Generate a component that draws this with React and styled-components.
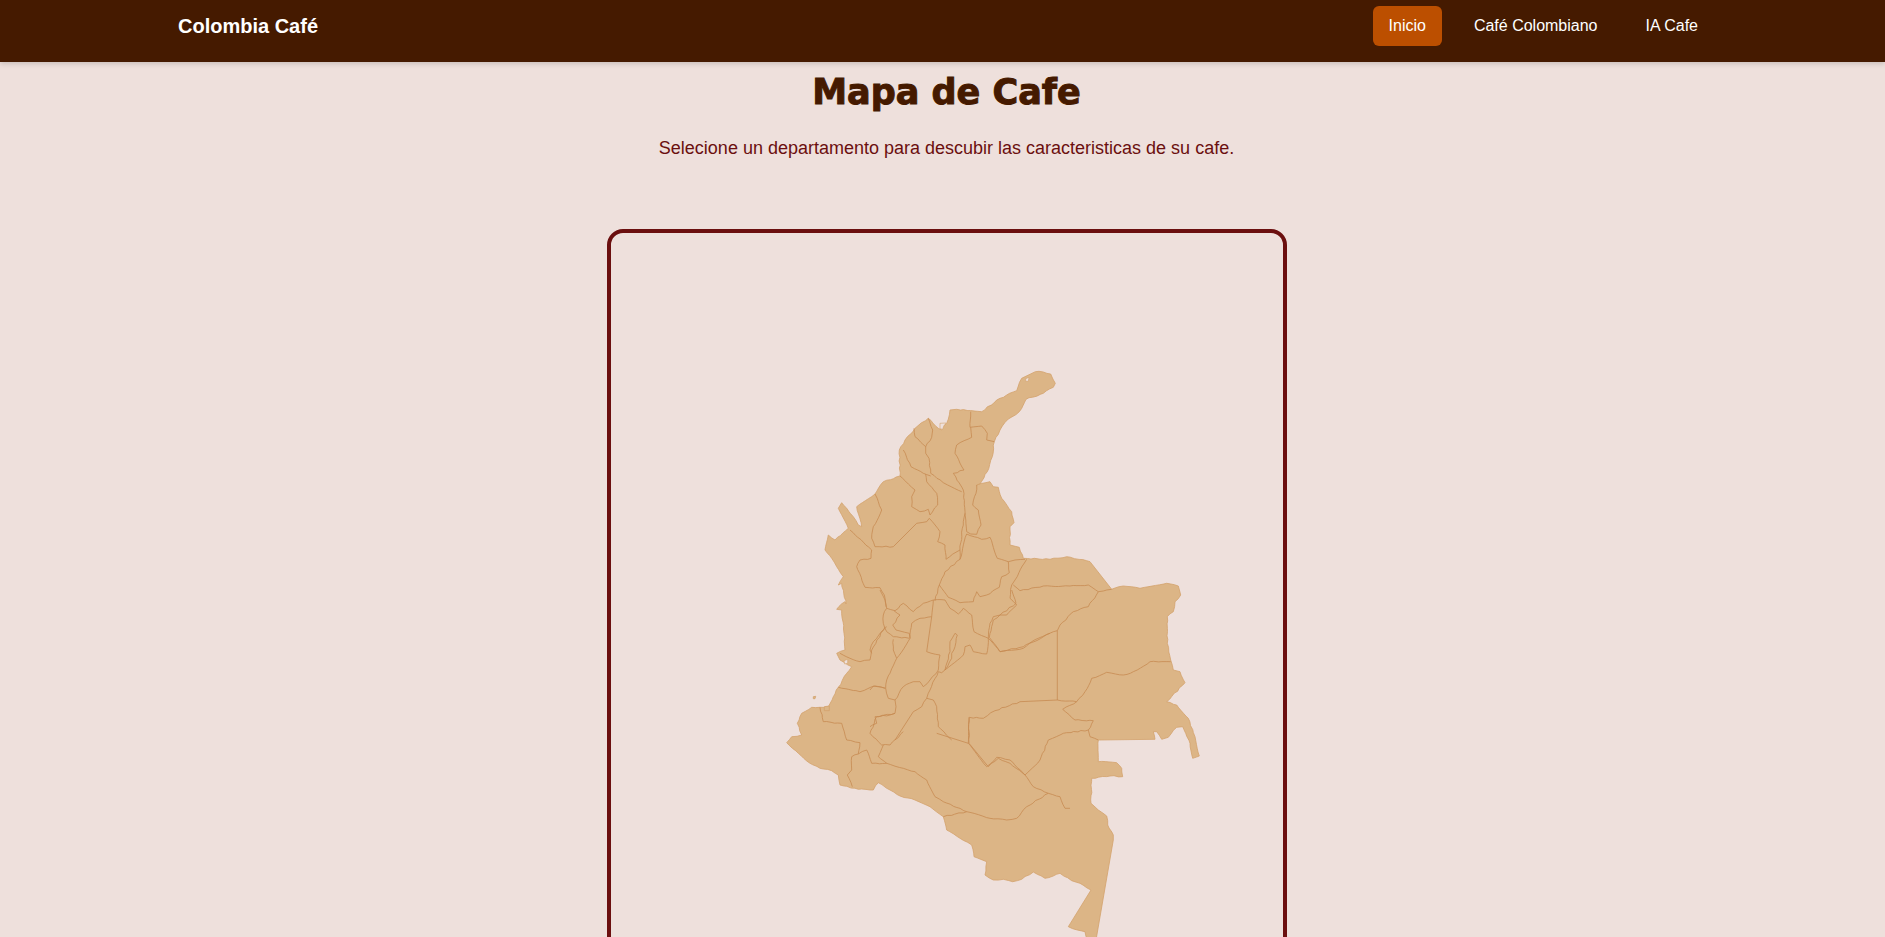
import React from "react"
import styled, { createGlobalStyle } from "styled-components"

// traced from crops, each list is [x, y] in crop pixels (3x), origin is the crop corner
const crop = (ox, oy) => (pts) => pts.map(([x, y]) => [ox + x / 3, oy + y / 3])
const north = crop(760, 350)
const east = crop(960, 500)
const west = crop(770, 600)
const south = crop(840, 740)
const center = crop(870, 590)

const outline = [
  ...north([[826,65],[850,66],[872,72],[886,100],[880,112],[850,130],[798,148],[778,185],[745,207],[720,240],[703,275],[697,320],[682,365],[660,402],[650,405],[690,395],[700,410],[715,412],[725,445],[755,485],[762,518],[750,530],[750,585],[778,592],[790,625],[870,628]]),
  ...east([[270,178],[320,170],[380,182],[390,185],[455,268],[490,258],[540,265],[620,250],[655,258],[662,285],[645,305],[640,335],[622,350],[622,430],[632,480],[640,510],[660,515],[675,548],[620,605],[650,615],[685,655],[705,710],[718,768],[698,775],[690,730],[668,680],[650,682],[625,712],[605,718],[590,695],[580,695],[585,718],[415,720]]),
  ...south([[775,65],[830,68],[845,85],[848,110],[810,108],[755,115],[753,190],[775,210],[800,228],[803,255],[820,285],[820,300],[768,600],[742,600],[735,575],[712,570],[685,560],[753,450],[720,430],[695,422],[660,400],[615,415],[580,396],[545,418],[518,425],[490,418],[460,420],[435,405],[440,365],[402,350],[395,315],[360,295],[320,270],[310,230],[270,200],[225,180],[180,168],[150,150],[115,128],[100,150],[55,148],[0,135]]),
  ...west([[210,555],[205,525],[185,512],[150,505],[120,490],[85,460],[50,428],[65,410],[95,405],[82,370],[95,340],[125,322],[150,322],[175,320],[190,290],[205,262],[230,220],[245,200],[210,180],[200,160],[225,150],[222,100],[215,30],[200,28],[225,5]]),
  ...north([[258,762],[245,700],[235,705],[250,680],[230,650],[215,625],[195,600],[205,555],[225,570],[265,535],[235,475],[245,458],[280,500],[295,525],[305,530],[290,470],[345,432],[370,395],[420,378],[418,300],[435,270],[465,235],[505,205],[535,235],[545,240],[560,220],[570,180],[590,178],[665,185],[720,145],[770,122],[785,85]]),
]

const borders = [
  north([[632,185],[630,232],[665,228],[682,250],[680,270],[703,275]]),
  north([[632,232],[635,262],[590,285],[585,310],[612,360],[580,370],[610,420],[615,485],[620,545],[632,552]]),
  north([[650,405],[648,430],[638,465],[655,480],[663,525],[650,553],[632,552]]),
  north([[505,205],[518,240],[515,262],[497,290],[465,260],[462,235]]),
  north([[497,290],[497,310],[507,325],[512,370],[550,398],[605,425]]),
  north([[430,300],[453,350],[490,370],[512,378]]),
  north([[420,378],[465,420],[455,440],[455,470],[480,485],[505,478],[510,495],[533,465],[530,430],[500,395],[497,372]]),
  north([[345,432],[365,480],[340,530],[335,565],[345,590],[400,590],[470,520],[500,515],[508,505]]),
  north([[508,505],[540,545],[533,575],[555,585],[558,628],[600,600],[610,515],[615,490]]),
  north([[600,600],[600,628],[555,665],[538,705],[525,752]]),
  north([[378,770],[373,735],[360,713],[315,712],[290,650],[300,630],[333,625],[335,600],[270,540]]),
  north([[600,628],[620,552],[665,568],[690,562],[712,625],[745,635],[748,668],[725,680],[718,712],[680,735],[660,740],[650,725],[640,755],[600,758],[565,742],[538,705]]),
  north([[745,635],[765,630],[795,628]]),
  east([[160,255],[180,272],[250,258],[330,258],[385,255],[415,275],[455,268]]),
  east([[415,275],[385,320],[340,335],[300,375],[292,392],[215,425],[190,445],[120,455],[88,412]]),
  east([[292,392],[292,600]]),
  east([[200,178],[165,240],[155,255],[150,295],[170,315],[140,345],[120,345],[100,360],[88,412]]),
  east([[632,485],[570,485],[520,515],[490,525],[440,517],[395,535],[375,575],[350,605],[292,600],[180,605],[105,632],[70,655],[28,652],[25,730],[80,800],[110,772],[150,780],[195,825]]),
  east([[308,628],[350,605]]),
  east([[308,628],[345,660],[400,662],[385,690],[310,700],[265,720],[240,780],[195,825]]),
  east([[385,690],[390,710],[415,720]]),
  // coffee belt, finer crop
  center([[30,0],[45,30],[50,55],[40,75],[40,100],[50,125],[70,140],[118,145]]),
  center([[50,55],[75,62],[100,40],[130,65],[160,40],[190,30],[225,30],[240,55],[265,72],[280,55],[305,75],[312,125],[355,145]]),
  center([[72,62],[90,75],[68,105],[78,120],[118,130],[120,145]]),
  center([[190,30],[185,80],[150,85],[125,100],[120,145],[80,205],[50,270],[47,295],[55,325],[75,330],[100,290],[130,275],[150,275],[160,290],[180,270],[205,240],[210,195],[170,185],[185,80]]),
  center([[47,295],[10,288],[0,300]]),
  center([[50,110],[10,155],[0,180],[5,190]]),
  center([[70,148],[70,180],[80,205]]),
  center([[255,130],[262,135],[255,170],[245,190],[245,205],[225,240],[240,185],[240,155],[255,130]]),
  center([[205,245],[215,248],[280,195],[285,170],[300,165],[310,185],[350,192],[355,145]]),
  center([[355,145],[390,185],[460,170],[540,130]]),
  center([[205,245],[180,300],[170,325],[190,330],[200,350],[205,410],[245,450]]),
  center([[170,325],[155,350],[130,365],[75,450]]),
  center([[355,145],[360,100],[370,80],[390,75],[438,40],[430,15],[425,0]]),
  center([[75,330],[78,350],[75,370],[60,375],[15,380],[20,400],[0,410]]),
  west([[500,400],[595,430]]),
  west([[597,352],[597,430],[655,500],[685,475],[720,490],[765,525],[790,560],[835,580],[870,590],[885,625],[900,625]]),
  west([[835,580],[770,620],[740,655],[710,660],[660,655],[590,635],[520,650]]),
  west([[590,635],[520,605],[495,590],[470,540],[435,515],[400,505],[350,490],[305,490],[290,450],[265,462]]),
  west([[400,395],[360,435],[335,435],[300,400],[320,350],[375,340]]),
  west([[345,80],[305,150],[300,180],[270,185],[240,175],[210,160]]),
  west([[205,262],[270,275],[315,258],[345,265]]),
  west([[150,322],[160,365],[215,370],[230,420],[270,428],[265,462],[245,470],[245,510],[232,525],[247,560]]),
  west([[350,490],[325,470],[340,435]]),
]

// small lagoons on the coast, same colour as the page
const lagoons = [
  north([[797,86],[807,82],[805,94],[797,94]]),
  north([[540,220],[558,219],[548,238],[540,236]]),
  west([[222,182],[233,178],[233,190],[224,192]]),
]

const islands = [
  west([[130,290],[137,289],[135,296],[130,296]]),
  west([[163,320],[178,318],[178,332],[163,332]]),
]

// borders are not smooth in the picture: break long edges up with a small steady wobble.
// Edges over 30px stay straight (llanos and trapecio limits are ruler lines).
const wobble = (x, y, k) => Math.sin(x * 12.9898 + y * 78.233 + k) * 0.5

const roughen = (pts) => {
  const out = []
  pts.forEach(([x, y], i) => {
    out.push([x, y])
    const next = pts[i + 1]
    if (!next) return
    const len = Math.hypot(next[0] - x, next[1] - y)
    if (len > 30) return
    const steps = Math.floor(len / 3.5)
    for (let s = 1; s < steps; s++) {
      const px = x + ((next[0] - x) * s) / steps
      const py = y + ((next[1] - y) * s) / steps
      out.push([px + wobble(px, py, 1), py + wobble(px, py, 2)])
    }
  })
  return out
}

const toPath = (pts, close) =>
  roughen(pts)
    .map(([x, y], i) => `${i ? "L" : "M"}${x.toFixed(1)} ${y.toFixed(1)}`)
    .join("") + (close ? "Z" : "")

const GlobalStyle = createGlobalStyle`
  html, body {
    margin: 0;
    background: #eee0dc;
    font-family: "Liberation Sans", Arial, sans-serif;
  }
`

const Header = styled.header`
  height: 62px;
  box-sizing: border-box;
  padding: 6px 171px 0 178px;
  background: #451a00;
  box-shadow: 0 2px 5px rgba(0, 0, 0, 0.15);
  display: flex;
  justify-content: space-between;
  align-items: flex-start;
`

const Brand = styled.div`
  font-size: 20px;
  font-weight: bold;
  color: #fff;
  line-height: 40px;
`

const Nav = styled.nav`
  display: flex;
  gap: 16px;
`

const NavLink = styled.a`
  padding: 8px 16px;
  border-radius: 6px;
  font-size: 16px;
  line-height: 24px;
  color: #fff;
  background: ${(p) => (p.$active ? "#bc4f00" : "transparent")};
`

const Main = styled.main`
  padding-left: 8px;
  display: flex;
  flex-direction: column;
  align-items: center;
`

const Title = styled.h1`
  margin: 8px 0 0;
  font-family: "DejaVu Sans", "Liberation Sans", sans-serif;
  font-size: 35px;
  line-height: 44px;
  font-weight: bold;
  color: #451a00;
  -webkit-text-stroke: 1px #451a00;
`

const Subtitle = styled.p`
  margin: 22px 0 0;
  font-size: 18px;
  line-height: 24px;
  color: #6b0f0f;
`

const MapCard = styled.div`
  margin: 69px 0 40px;
  width: 680px;
  height: 860px;
  box-sizing: border-box;
  border: 4px solid #6b0f0f;
  border-radius: 16px;
  overflow: hidden;
`

// viewBox is in page pixels, the card's inner corner sits at 611,233
const MapSvg = styled.svg`
  display: block;
  width: 672px;
  height: 852px;
`

const Land = styled.path`
  fill: #dcb586;
  stroke: #d3a26c;
  stroke-width: 0.8;
  stroke-linejoin: round;
`

const Lagoon = styled.path`
  fill: #eee0dc;
  stroke: #d3a26c;
  stroke-width: 0.6;
`

const Border = styled.path`
  fill: none;
  stroke: #c68a52;
  stroke-width: 0.8;
  stroke-linejoin: round;
`

export default function App() {
  return (
    <>
      <GlobalStyle />
      <Header>
        <Brand>Colombia Café</Brand>
        <Nav>
          <NavLink $active>Inicio</NavLink>
          <NavLink>Café Colombiano</NavLink>
          <NavLink>IA Cafe</NavLink>
        </Nav>
      </Header>
      <Main>
        <Title>Mapa de Cafe</Title>
        <Subtitle>Selecione un departamento para descubir las caracteristicas de su cafe.</Subtitle>
        <MapCard>
          <MapSvg viewBox="611 233 672 852">
            <Land d={toPath(outline, true)} />
            {islands.map((b, i) => (
              <Land key={i} d={toPath(b, true)} />
            ))}
            {lagoons.map((b, i) => (
              <Lagoon key={i} d={toPath(b, true)} />
            ))}
            {borders.map((b, i) => (
              <Border key={i} d={toPath(b)} />
            ))}
          </MapSvg>
        </MapCard>
      </Main>
    </>
  )
}
